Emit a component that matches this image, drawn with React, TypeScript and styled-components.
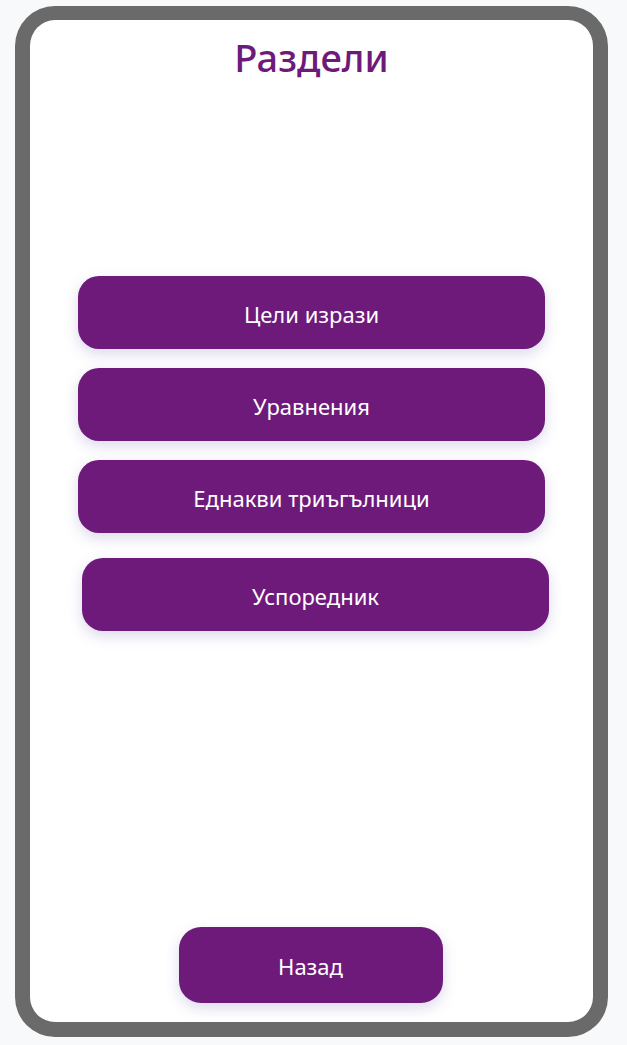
import React from "react";
import styled, { createGlobalStyle } from "styled-components";

const GlobalStyle = createGlobalStyle`
  html, body {
    margin: 0;
    padding: 0;
    background: #f8f9fb;
    font-family: "Noto Sans", "Open Sans", sans-serif;
  }
`;

const Phone = styled.div`
  box-sizing: border-box;
  width: 593px;
  height: 1031px;
  margin: 6px 0 0 15px;
  border: 15px solid #6a6a6a;
  border-top-width: 14px;
  border-radius: 40px;
  background: #ffffff;
  display: flex;
  flex-direction: column;
  align-items: center;
  padding: 14px 0 19px;
`;

const Title = styled.h1`
  margin: 0;
  font-size: 38px;
  font-weight: 500;
  line-height: 46px;
  color: #6e1a7b;
`;

const TopicList = styled.div`
  margin-top: 196px;
  display: flex;
  flex-direction: column;
  align-items: center;
  gap: 19px;
`;

const Pill = styled.button<{ $shift?: number; $extraGap?: number }>`
  box-sizing: border-box;
  border: none;
  background: #6e1a7b;
  color: #ffffff;
  font-family: "Noto Sans", "Open Sans", sans-serif;
  font-size: 22px;
  padding-top: 3px;
  cursor: pointer;
  box-shadow: 0 5px 14px rgba(90, 80, 170, 0.22);
  width: 467px;
  height: 73px;
  border-radius: 21px;
  margin-left: ${(p) => (p.$shift ? p.$shift * 2 : 0)}px;
  margin-top: ${(p) => p.$extraGap ?? 0}px;
`;

const BackButton = styled(Pill)`
  width: 264px;
  height: 76px;
  border-radius: 22px;
  margin-top: auto;
  margin-right: 2px;
`;

const topics = ["Цели изрази", "Уравнения", "Еднакви триъгълници"];

export default function App() {
  return (
    <>
      <GlobalStyle />
      <Phone>
        <Title>Раздели</Title>
        <TopicList>
          {topics.map((t) => (
            <Pill key={t}>{t}</Pill>
          ))}
          <Pill $shift={4} $extraGap={6}>
            Успоредник
          </Pill>
        </TopicList>
        <BackButton>Назад</BackButton>
      </Phone>
    </>
  );
}
